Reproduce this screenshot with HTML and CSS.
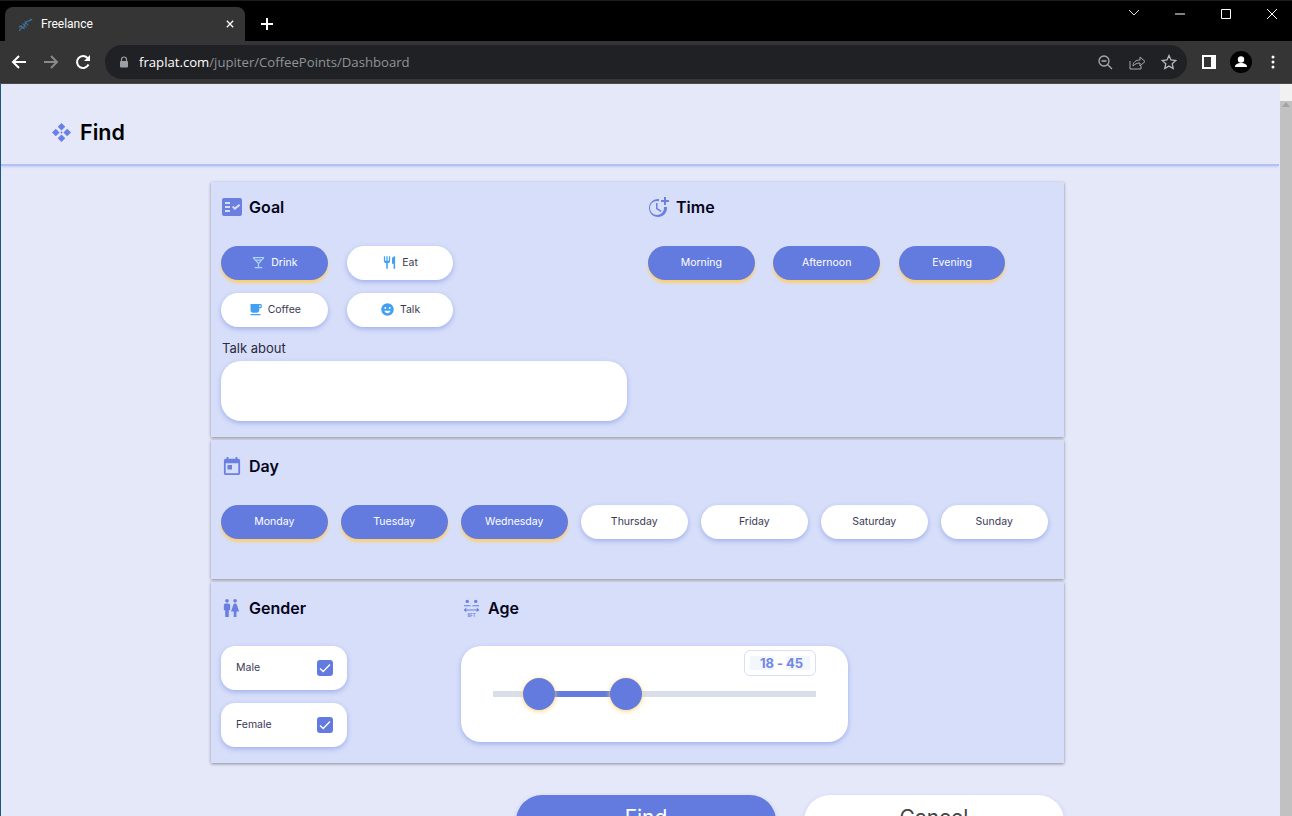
FILE: index.html
```html
<!DOCTYPE html>
<html lang="en">
<head>
  <meta charset="UTF-8">
  <title>Freelance</title>
  <link rel="stylesheet" href="styles.css">
</head>
<body>

  <!-- browser tab strip -->
  <div class="tabstrip">
    <div class="tab">
      <svg class="favicon" viewBox="0 0 16 16"><path d="M1 11c2-3 3 2 5 0s1-5 3-6 3 1 5-3M2 15c-1-3 3-3 4-4s2-5 3-6 5 0 6-3M5 7l4 4M7 5l4 4M3 9l4 4" fill="none" stroke="#3f6f96" stroke-width="1.300"/></svg>
      <span class="tab-title">Freelance</span>
      <svg class="tab-close" viewBox="0 0 10 10"><path d="M1 1l8 8M9 1l-8 8" stroke="#fff" stroke-width="1.600"/></svg>
    </div>
    <svg class="new-tab" viewBox="0 0 12 12"><path d="M6 0v12M0 6h12" stroke="#fff" stroke-width="2"/></svg>
    <div class="window-controls">
      <svg viewBox="0 0 46 16"><path d="M18 4l5 5 5-5" fill="none" stroke="#ddd"/></svg>
      <svg viewBox="0 0 46 16"><path d="M18 8h10" stroke="#fff"/></svg>
      <svg viewBox="0 0 46 16"><path d="M18.500 3.500h9v9h-9z" fill="none" stroke="#fff"/></svg>
      <svg viewBox="0 0 46 16"><path d="M18 3l10 10M28 3L18 13" stroke="#fff"/></svg>
    </div>
  </div>

  <!-- browser toolbar -->
  <div class="toolbar">
    <button class="tool"><svg viewBox="0 0 16 16"><path d="M15 8H2M8 2L2 8l6 6" fill="none" stroke="#fff" stroke-width="2"/></svg></button>
    <button class="tool"><svg viewBox="0 0 16 16"><path d="M1 8h13M8 2l6 6-6 6" fill="none" stroke="#8a8a8a" stroke-width="2"/></svg></button>
    <button class="tool"><svg viewBox="0 0 16 16"><path d="M13.500 10.500A6 6 0 1 1 12.500 4" fill="none" stroke="#fff" stroke-width="2"/><path d="M15 1v6H9z" fill="#fff"/></svg></button>
    <div class="omnibox">
      <svg class="lock" viewBox="0 0 10 12"><path d="M2.500 5V3.500a2.500 2.500 0 0 1 5 0V5" fill="none" stroke="#9aa0a6" stroke-width="1.200"/><rect x="1" y="5" width="8" height="6.500" rx="1" fill="#9aa0a6"/></svg>
      <span class="url"><b>fraplat.com</b>/jupiter/CoffeePoints/Dashboard</span>
      <button class="tool"><svg viewBox="0 0 16 16"><circle cx="7" cy="7" r="5" fill="none" stroke="#a8abae" stroke-width="1.300"/><path d="M4.500 7h5M10.500 10.500L15 15" stroke="#a8abae" stroke-width="1.300"/></svg></button>
      <button class="tool"><svg viewBox="0 0 16 16"><path d="M1 7v8h11v-3" fill="none" stroke="#a8abae" stroke-width="1"/><path d="M4 12c0-4 3-6 7-6V3l5 4.500L11 12V9c-3 0-5 1-7 3z" fill="none" stroke="#a8abae" stroke-width="1"/></svg></button>
      <button class="tool"><svg viewBox="0 0 16 16"><path d="M8 1.500l2 4.500 4.800.5-3.600 3.200 1 4.800L8 12.100 3.800 14.500l1-4.800L1.200 6.500 6 6z" fill="none" stroke="#b5b8bb" stroke-width="1.300"/></svg></button>
    </div>
    <div class="toolbar-end">
      <button class="tool"><svg viewBox="0 0 14 14"><path d="M0 0h14v14H0zM2 2v10h7V2z" fill="#fff" fill-rule="evenodd"/></svg></button>
      <button class="tool"><span class="avatar"><svg viewBox="0 0 22 22"><circle cx="11" cy="8.500" r="3.200" fill="#fff"/><path d="M5 16c0-3 3-4 6-4s6 1 6 4z" fill="#fff"/></svg></span></button>
      <button class="tool"><svg viewBox="0 0 14 14"><circle cx="7" cy="2" r="1.500" fill="#fff"/><circle cx="7" cy="7" r="1.500" fill="#fff"/><circle cx="7" cy="12" r="1.500" fill="#fff"/></svg></button>
    </div>
  </div>

  <div class="viewport">
    <div class="page">

      <header class="page-header">
        <svg class="icon-find" viewBox="0 0 20 20"><path d="M10 0l4 4-4 4-4-4zM16 6l4 4-4 4-4-4zM4 6l4 4-4 4-4-4zM10 12l4 4-4 4-4-4z"/><circle cx="10" cy="10" r="1"/></svg>
        <h1>Find</h1>
      </header>

      <div class="form">

        <section class="panel panel-goal">
          <div>
            <h2 class="panel-title">
              <svg class="icon" viewBox="2 3 20 18"><path d="M20 3H4c-1.100 0-2 .9-2 2v14c0 1.100.9 2 2 2h16c1.100 0 2-.9 2-2V5c0-1.100-.9-2-2-2zM10 17H5v-2h5v2zm0-4H5v-2h5v2zm0-4H5V7h5v2zm4.820 6L12 12.160l1.410-1.410 1.410 1.420L18.990 9l1.420 1.420L14.820 15z"/></svg>
              Goal
            </h2>
            <div class="goal-buttons">
              <button class="pill active"><svg class="pill-icon" viewBox="0 0 24 24"><path fill="#a9d3fb" d="M14.770 9L12 12.110 9.230 9h5.540M21 3H3v2l8 9v5H6v2h12v-2h-5v-5l8-9V3zM7.430 7L5.660 5h12.690l-1.780 2H7.430z"/></svg>Drink</button>
              <button class="pill"><svg class="pill-icon" viewBox="0 0 24 24"><path d="M11 9H9V2H7v7H5V2H3v7c0 2.120 1.660 3.840 3.750 3.970V22h2.500v-9.030C11.340 12.840 13 11.120 13 9V2h-2v7zm5-3v8h2.500v8H21V2c-2.760 0-5 2.240-5 4z"/></svg>Eat</button>
              <button class="pill"><svg class="pill-icon" viewBox="0 0 24 24"><path d="M20 3H4v10c0 2.210 1.790 4 4 4h6c2.210 0 4-1.790 4-4v-3h2c1.110 0 2-.9 2-2V5c0-1.110-.89-2-2-2zm0 5h-2V5h2v3zM4 19h16v2H4z"/></svg>Coffee</button>
              <button class="pill"><svg class="pill-icon" viewBox="0 0 24 24"><circle cx="12" cy="12" r="10"/><circle cx="8.500" cy="9.500" r="1.500" fill="#fff"/><circle cx="15.500" cy="9.500" r="1.500" fill="#fff"/><path d="M7 14h10c-.8 2.400-2.800 3.800-5 3.800S7.800 16.400 7 14z" fill="#fff"/></svg>Talk</button>
            </div>
            <label class="field-label">Talk about</label>
            <div class="talk-input"></div>
          </div>
          <div>
            <h2 class="panel-title">
              <svg class="icon icon-time" viewBox="3 2 20 20"><path d="M10 8v6l4.700 2.900.8-1.200-4-2.400V8z"/><path d="M17.920 12c.05.33.08.66.08 1 0 3.900-3.100 7-7 7s-7-3.100-7-7 3.100-7 7-7c.7 0 1.370.1 2 .29V4.230C13.360 4.080 12.690 4 12 4c-5 0-9 4-9 9s4 9 9 9 9-4 9-9c0-.34-.02-.67-.06-1h-2.020z"/><path d="M20 5V2h-2v3h-3v2h3v3h2V7h3V5z"/></svg>
              Time
            </h2>
            <div class="time-buttons">
              <button class="pill active">Morning</button>
              <button class="pill active">Afternoon</button>
              <button class="pill active">Evening</button>
            </div>
          </div>
        </section>

        <section class="panel panel-day">
          <h2 class="panel-title">
            <svg class="icon" viewBox="3 1 18 20"><path d="M19 3h-1V1h-2v2H8V1H6v2H5c-1.110 0-1.990.9-1.990 2L3 19c0 1.100.89 2 2 2h14c1.100 0 2-.9 2-2V5c0-1.100-.9-2-2-2zm0 16H5V8h14v11zM7 10h5v5H7z"/></svg>
            Day
          </h2>
          <div class="day-buttons">
            <button class="pill active">Monday</button>
            <button class="pill active">Tuesday</button>
            <button class="pill active">Wednesday</button>
            <button class="pill">Thursday</button>
            <button class="pill">Friday</button>
            <button class="pill">Saturday</button>
            <button class="pill">Sunday</button>
          </div>
        </section>

        <section class="panel panel-people">
          <div>
            <h2 class="panel-title">
              <svg class="icon icon-wc" viewBox="4 2 17 20"><path d="M5.500 22v-7.500H4V9c0-1.100.9-2 2-2h3c1.100 0 2 .9 2 2v5.500H9.500V22h-4zM18 22v-6h3l-2.540-7.630C18.180 7.550 17.420 7 16.560 7h-.12c-.86 0-1.630.55-1.900 1.370L12 16h3v6h3zM7.500 6c1.110 0 2-.89 2-2s-.89-2-2-2-2 .89-2 2 .89 2 2 2zm9 0c1.110 0 2-.89 2-2s-.89-2-2-2-2 .89-2 2 .89 2 2 2z"/></svg>
              Gender
            </h2>
            <div class="check-list">
              <div class="check-card"><span class="check-label">Male</span><span class="checkbox"><svg viewBox="0 0 16 16"><path d="M3 8.500l3.200 3L13 4.500" fill="none" stroke="#fff" stroke-width="1.300"/></svg></span></div>
              <div class="check-card"><span class="check-label">Female</span><span class="checkbox"><svg viewBox="0 0 16 16"><path d="M3 8.500l3.200 3L13 4.500" fill="none" stroke="#fff" stroke-width="1.300"/></svg></span></div>
            </div>
          </div>
          <div>
            <h2 class="panel-title">
              <svg class="icon icon-age" viewBox="0 0 18 20"><circle cx="4.500" cy="2.500" r="1.800"/><circle cx="13.500" cy="2.500" r="1.800"/><path d="M1 6.500h7v1.200H1zM10 6.500h7v1.200h-7zM1 11h16v1.200H1z"/><path d="M3.500 9L1 11.600l2.500 2.400zM14.500 9l2.500 2.600-2.500 2.400z"/><text x="9" y="19.500" class="icon-age-text">6FT</text></svg>
              Age
            </h2>
            <div class="age-card">
              <div class="age-badge"><span class="age-from">18</span><i class="age-dash">-</i><span class="age-to">45</span></div>
              <div class="slider">
                <div class="slider-fill"></div>
                <div class="slider-thumb thumb-low"></div>
                <div class="slider-thumb thumb-high"></div>
              </div>
            </div>
          </div>
        </section>

        <div class="form-actions">
          <button class="action action-find">Find</button>
          <button class="action action-cancel">Cancel</button>
        </div>

      </div>
    </div>

    <div class="scrollbar">
      <div class="scroll-arrow"></div>
      <div class="scroll-thumb"></div>
    </div>
  </div>

</body>
</html>
```

FILE: styles.css
```css
* { box-sizing: border-box; }
html, body { height: 100%; }
body { margin: 0; height: 816px; overflow: hidden; background: #e5e8f9; font-family: "Inter", "Liberation Sans", sans-serif; display: flex; flex-direction: column; }
button { font-family: inherit; border: none; cursor: pointer; }

/* browser chrome */
.tabstrip { height: 41px; flex: none; background: #000; border-top: 1px solid #1c1c1c; display: flex; align-items: flex-end; padding-left: 5px; }
.tab { width: 240px; height: 34px; background: #353535; border-radius: 8px 8px 0 0; display: flex; align-items: center; padding: 0 10px 0 13px; }
.favicon { width: 15px; height: 15px; }
.tab-title { font-family: "Roboto", sans-serif; font-size: 12px; color: #fff; margin-left: 8px; flex: 1; }
.tab-close { width: 8px; height: 8px; margin-right: 1px; }
.new-tab { width: 12px; height: 12px; margin: 0 0 11px 16px; }
.window-controls { display: flex; align-self: flex-start; margin: 0 -3px 0 auto; }
.window-controls svg { width: 46px; height: 16px; display: block; margin-top: 5px; }

.toolbar { height: 43px; flex: none; background: #353535; display: flex; align-items: center; padding: 0 3px 1px 3px; border-bottom: 1px solid #4a4a4a; }
.tool { width: 32px; height: 32px; padding: 0; background: none; display: flex; align-items: center; justify-content: center; flex: none; }
.tool svg { width: 16px; height: 16px; display: block; }
.omnibox { flex: 1; height: 34px; margin: 0 0 0 6px; background: #202124; border-radius: 17px; display: flex; align-items: center; padding: 0 2px 0 14px; }
.lock { width: 10px; height: 12px; flex: none; }
.url { flex: 1; margin-left: 10px; font-family: "Open Sans", sans-serif; font-size: 13.15px; color: #8f9498; }
.url b { font-weight: 400; color: #fff; }
.toolbar-end { display: flex; margin-left: 6px; }
.toolbar-end .tool svg { width: 14px; height: 14px; }
.avatar { width: 22px; height: 22px; background: #000; border-radius: 50%; display: block; }
.toolbar-end .avatar svg { width: 22px; height: 22px; }

/* page */
.viewport { flex: 1; min-height: 0; display: flex; border-left: 1px solid #1a5a80; }
.page { width: 1278px; flex: none; overflow: hidden; }
.page-header { height: 82px; display: flex; align-items: center; padding: 16px 0 0 51px; border-bottom: 2px solid #b3c0f1; box-shadow: 0 1px 2px rgba(179,192,241,.7), 0 -1px 1px rgba(179,192,241,.4); }
.page-header h1 { margin: 0 0 0 9px; font-size: 21.5px; font-weight: 600; color: #000; }
.icon-find { width: 19px; height: 19px; fill: #6a80e6; }

.form { margin: 16px 0 0 210px; width: 853px; }
.panel { background: #d6def9; box-shadow: 0 1px 3px rgba(0,0,0,.4); padding: 14px 10px 0; margin-bottom: 3px; }
.panel-goal { height: 255px; display: grid; grid-template-columns: 427px 1fr; }
.panel-day { height: 139px; padding-top: 15px; }
.panel-people { height: 181px; padding-top: 15px; display: grid; grid-template-columns: 240px 1fr; }
.panel-title { margin: 0; height: 22px; display: flex; align-items: center; gap: 7px; font-size: 16px; font-weight: 600; color: #05051a; }
.icon { width: 20px; height: 18px; margin-left: 1px; fill: #6a7fe0; flex: none; }
.icon-time { height: 20px; width: 20px; }
.icon-wc { width: 17px; height: 18px; margin: 0 2px 0 2px; }
.icon-age { width: 17px; height: 19px; margin: 0 1px 0 2px; }
.icon-age-text { font-size: 4.500px; font-weight: 700; text-anchor: middle; }

.pill { width: 106.6px; height: 34px; border-radius: 17px; background: #fff; color: #3a3a55; font-size: 10.5px; display: flex; align-items: center; justify-content: center; padding: 0 0 1px; box-shadow: 0 2px 5px rgba(98,120,222,.45); }
.pill.active { background: #637bde; color: #fff; box-shadow: 0 3px 3px #fbcf75; }
.pill-icon { width: 15px; height: 15px; fill: #42a0f2; margin-right: 5px; }
.goal-buttons { margin-top: 28px; display: grid; grid-template-columns: 106.6px 106.6px; column-gap: 19.2px; row-gap: 13px; }
.time-buttons { margin-top: 28px; display: flex; gap: 18.8px; }
.day-buttons { margin-top: 28px; display: flex; gap: 13.4px; }

.field-label { display: block; margin: 14px 0 5px 1px; font-size: 13px; line-height: 15px; color: #2a2a40; }
.talk-input { width: 406px; height: 60px; background: #fff; border-radius: 20px; box-shadow: 0 2px 5px rgba(98,120,222,.45); }

.check-list { margin-top: 27px; display: flex; flex-direction: column; gap: 13px; }
.check-card { width: 126px; height: 44px; background: #fff; border-radius: 14px; display: flex; align-items: center; justify-content: space-between; padding: 0 14px 0 15px; font-size: 10.5px; color: #3a3a55; box-shadow: 0 2px 5px rgba(98,120,222,.45); }
.check-label { margin-bottom: 2px; }
.checkbox { width: 16px; height: 16px; background: #637bde; border-radius: 3px; display: block; }
.checkbox svg { width: 16px; height: 16px; display: block; }

.age-card { position: relative; margin-top: 27px; width: 387px; height: 96px; background: #fff; border-radius: 20px; padding: 45px 32px 0; box-shadow: 0 2px 5px rgba(98,120,222,.45); }
.age-badge { position: absolute; top: 4px; left: 283px; width: 72px; height: 26px; border: 1px solid #d9e0f3; border-radius: 6px; display: flex; align-items: center; justify-content: center; font-size: 13px; font-weight: 700; color: #7388e2; }
.age-from, .age-to { width: 24px; background: #f2f6fd; line-height: 14px; }
.age-from { text-align: right; }
.age-dash { width: 12px; text-align: center; font-style: normal; }
.slider { position: relative; height: 6px; background: #d8dfe9; }
.slider-fill { position: absolute; left: 46px; width: 87px; height: 6px; background: #637bde; }
.slider-thumb { position: absolute; top: -13px; width: 32px; height: 32px; border-radius: 50%; background: #637bde; box-shadow: 0 1px 5px #fbcf75; }
.thumb-low { left: 30px; }
.thumb-high { left: 117px; }

.form-actions { margin: 32px 0 0 305px; display: flex; gap: 28px; }
.action { width: 260px; height: 52px; border-radius: 26px; font-size: 21px; padding: 0 0 7px; box-shadow: 0 2px 5px rgba(98,120,222,.3); }
.action-find { background: #637bde; color: #fff; }
.action-cancel { background: #fff; color: #444; }

/* scrollbar */
.scrollbar { flex: 1; background: #f1f1f1; margin-left: 1px; }
.scroll-arrow { height: 17px; width: 0; margin: 0 auto; border: solid transparent; border-width: 0 4px 5px; border-bottom-color: #a3a3a3; position: relative; top: 6px; }
.scroll-thumb { height: 715px; background: #c1c1c1; }
```
